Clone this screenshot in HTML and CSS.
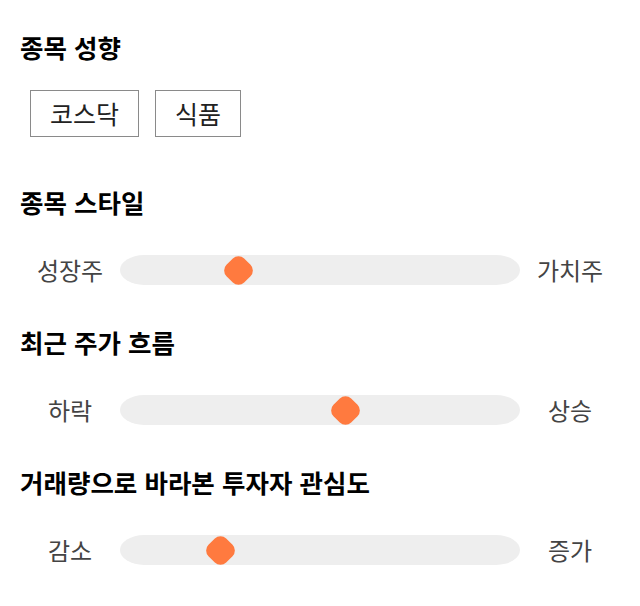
FILE: index.html
```html
<!DOCTYPE html>
<html lang="ko">
<head>
    <meta charset="UTF-8">
    <meta name="viewport" content="width=device-width, initial-scale=1.0">
    <title>종목 성향</title>
    <link rel="stylesheet" href="styles.css">
</head>
<body>
    <div class="panel">
        <!-- 종목 성향 -->
        <section class="section">
            <h2 class="section-title">종목 성향</h2>
            <div class="tags">
                <span class="tag">코스닥</span>
                <span class="tag">식품</span>
            </div>
        </section>

        <!-- 종목 스타일 -->
        <section class="section">
            <h2 class="section-title">종목 스타일</h2>
            <div class="scale">
                <span class="scale-label">성장주</span>
                <div class="track">
                    <span class="thumb" style="left: 29.5%"></span>
                </div>
                <span class="scale-label">가치주</span>
            </div>
        </section>

        <!-- 최근 주가 흐름 -->
        <section class="section">
            <h2 class="section-title">최근 주가 흐름</h2>
            <div class="scale">
                <span class="scale-label">하락</span>
                <div class="track">
                    <span class="thumb" style="left: 56.25%"></span>
                </div>
                <span class="scale-label">상승</span>
            </div>
        </section>

        <!-- 거래량 -->
        <section class="section">
            <h2 class="section-title">거래량으로 바라본 투자자 관심도</h2>
            <div class="scale">
                <span class="scale-label">감소</span>
                <div class="track">
                    <span class="thumb" style="left: 25%"></span>
                </div>
                <span class="scale-label">증가</span>
            </div>
        </section>
    </div>
</body>
</html>
```

FILE: styles.css
```css
body {
    margin: 0;
    padding: 0;
    background-color: #fff;
    font-family: 'Noto Sans CJK KR', 'Noto Sans', sans-serif;
    color: #000;
}
.panel {
    padding: 30px 20px 0 20px;
}
.section {
    margin-bottom: 40px;
}
.section-title {
    margin: 0;
    font-size: 25.5px;
    font-weight: bold;
    line-height: 34px;
    color: #000;
}
.tags {
    display: flex;
    gap: 16px;
    margin-top: 26px;
    margin-left: 10px;
    margin-bottom: 48px;
}
.tag {
    display: block;
    padding: 0 19px;
    height: 45px;
    line-height: 45px;
    border: 1px solid #8a8a8a;
    font-size: 25px;
    color: #222;
}
.scale {
    display: flex;
    align-items: center;
    height: 30px;
    margin-top: 36px;
}
.scale-label {
    width: 100px;
    text-align: center;
    font-size: 24px;
    line-height: 30px;
    color: #444;
}
.track {
    position: relative;
    width: 400px;
    height: 30px;
    background-color: #eeeeee;
    border-radius: 24px / 15px;
}
.thumb {
    position: absolute;
    top: 50%;
    width: 25px;
    height: 25px;
    margin-left: -12.5px;
    margin-top: -12.5px;
    background-color: #ff7a3f;
    border-radius: 8px;
    transform: rotate(45deg);
}
```
